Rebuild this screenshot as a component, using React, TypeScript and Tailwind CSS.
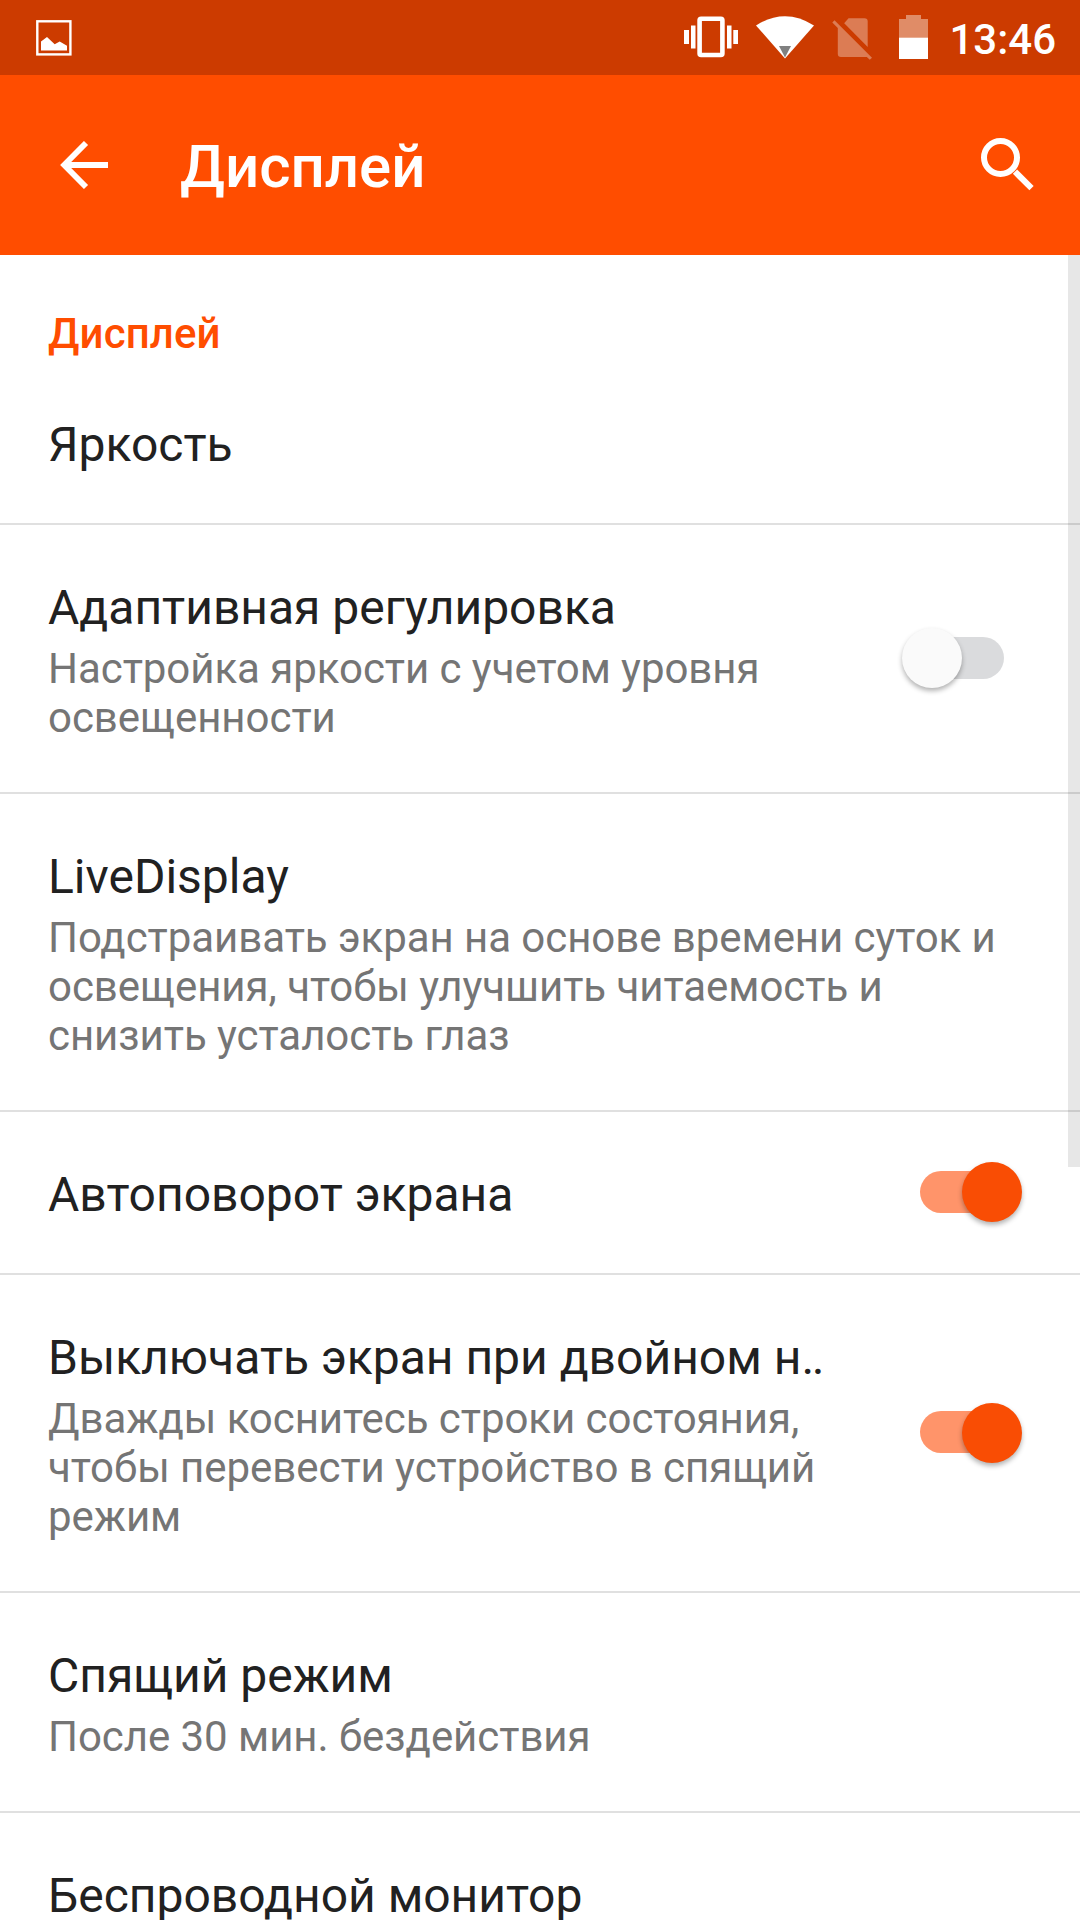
import { useState } from 'react';

const GalleryIcon = () => (
  <svg width="36" height="36" viewBox="36 20 36 36" fill="none">
    <rect x="37.3" y="21.3" width="33.1" height="33.1" stroke="#fff" strokeWidth="2.4" />
    <path d="M41 50.500V41.500L47 37l7.700 7.200 5-2.600 7.300 4.200v4.700z" fill="#fff" />
  </svg>
);

const VibrateIcon = () => (
  <svg width="54" height="42" viewBox="684 16 54 42" fill="#fff">
    <rect x="699.6" y="18.8" width="22.8" height="36.2" rx="1.5" fill="none" stroke="#fff" strokeWidth="4.6" />
    <path d="M684 30h5v14h-5zM691 25.5h4.5v23H691zM727 25.5h4.5v23H727zM733.3 30h4.7v14h-4.7z" />
  </svg>
);

const WifiIcon = () => (
  <svg width="58" height="43" viewBox="756 16 58 43">
    <path d="M756 25.5Q785 7 814 25.5L785 58.5z" fill="#fff" />
    <path d="M779 46h12l-6 11.5z" fill="#808080" />
  </svg>
);

const NoSimIcon = () => (
  <svg width="40" height="42" viewBox="832 18 40 42" fill="#dc7c54">
    <path d="M848.5 18.300H864.500a3.200 3.200 0 0 1 3.200 3.200V47L844.200 23.200z" />
    <path d="M834.5 20.300L872 57.700l-2.200 2L866.800 57H841a3.200 3.200 0 0 1-3.200-3.200V28L832.300 22.500z" />
  </svg>
);

const BatteryIcon = () => (
  <svg width="29" height="44" viewBox="899 15 29 44">
    <path d="M906 15h15v4h7v19h-29V19h7z" fill="#e08c67" />
    <path d="M899 37.7h29V59h-29z" fill="#fff" />
  </svg>
);

const BackIcon = () => (
  <svg width="48" height="48" viewBox="60 141 48 48" fill="none" stroke="#fff" strokeWidth="5.8">
    <path d="M108 165H66M86 143L64.2 165l21.8 22" />
  </svg>
);

const SearchIcon = () => (
  <svg width="54" height="54" viewBox="980 137 54 54" fill="none" stroke="#fff" strokeWidth="6">
    <circle cx="1000.5" cy="157.5" r="16.5" />
    <path d="M1015 171.700L1031.500 188.200" />
  </svg>
);

const Toggle = ({ on, onChange }: { on: boolean; onChange: () => void }) => (
  <button
    role="switch"
    aria-checked={on}
    onClick={onChange}
    className={`mb-[2px] flex h-[42px] w-[84px] shrink-0 items-center rounded-full ${
      on ? 'justify-end bg-[#ff946a]' : 'justify-start bg-[#dadbdd]'
    }`}
  >
    <span
      className={`mt-px size-[60px] shrink-0 rounded-full shadow-[0_3px_5px_rgba(0,0,0,0.3)] ${
        on ? '-mr-[18px] bg-[#f94d04]' : '-ml-[18px] bg-[#fafafa]'
      }`}
    />
  </button>
);

type Item = { id: string; title: string; summary?: string[]; toggle?: boolean };

const items: Item[] = [
  { id: 'brightness', title: 'Яркость' },
  {
    id: 'adaptive',
    title: 'Адаптивная регулировка',
    summary: ['Настройка яркости с учетом уровня', 'освещенности'],
    toggle: true,
  },
  {
    id: 'livedisplay',
    title: 'LiveDisplay',
    summary: [
      'Подстраивать экран на основе времени суток и',
      'освещения, чтобы улучшить читаемость и',
      'снизить усталость глаз',
    ],
  },
  { id: 'rotate', title: 'Автоповорот экрана', toggle: true },
  {
    id: 'doubletap',
    title: 'Выключать экран при двойном н‥',
    summary: ['Дважды коснитесь строки состояния,', 'чтобы перевести устройство в спящий', 'режим'],
    toggle: true,
  },
  { id: 'sleep', title: 'Спящий режим', summary: ['После 30 мин. бездействия'] },
  { id: 'cast', title: 'Беспроводной монитор' },
];

const App = () => {
  const [enabled, setEnabled] = useState<Record<string, boolean>>({
    adaptive: false,
    rotate: true,
    doubletap: true,
  });

  const flip = (id: string) => setEnabled(prev => ({ ...prev, [id]: !prev[id] }));

  return (
    <div className="flex h-[1920px] w-[1080px] flex-col overflow-hidden bg-white font-['Roboto',sans-serif]">
      {/* Status bar */}
      <div className="flex h-[75px] shrink-0 items-start bg-[#cc3b00] pl-[36px] pr-[24px] text-white">
        <div className="pt-[20px]">
          <GalleryIcon />
        </div>
        <div className="ml-auto flex items-start">
          <div className="pt-[16px]">
            <VibrateIcon />
          </div>
          <div className="ml-[18px] pt-[16px]">
            <WifiIcon />
          </div>
          <div className="ml-[18px] pt-[18px]">
            <NoSimIcon />
          </div>
          <div className="ml-[27px] pt-[15px]">
            <BatteryIcon />
          </div>
          <span className="ml-[21px] pt-[15px] text-[42px] font-medium leading-[49px]">13:46</span>
        </div>
      </div>

      {/* App bar */}
      <header className="flex h-[180px] shrink-0 items-center bg-[#ff4d00] pl-[60px] pr-[46px] text-white">
        <button aria-label="Назад">
          <BackIcon />
        </button>
        <h1 className="ml-[72px] mt-[4px] text-[60px] font-medium leading-[70px]">Дисплей</h1>
        <button className="-mt-[2px] ml-auto" aria-label="Поиск">
          <SearchIcon />
        </button>
      </header>

      <main className="relative min-h-0 flex-1 overflow-hidden">
        <h2 className="h-[107px] px-12 pt-[54px] text-[42px] font-medium leading-[49px] tracking-[0.1px] text-[#ff4d00]">
          Дисплей
        </h2>
        {items.map(item => (
          <div
            key={item.id}
            className="flex items-center justify-between whitespace-nowrap border-b-2 border-[#e0e0e0] pl-12 pr-[76px]"
          >
            <div className="pb-[50px] pt-[54px]">
              <div className="text-[48px] leading-[57px] text-[#212121]">{item.title}</div>
              {item.summary && (
                <div className="mt-2 text-[42px] leading-[49px] tracking-[-0.05px] text-[#757575]">
                  {item.summary.map(line => (
                    <div key={line}>{line}</div>
                  ))}
                </div>
              )}
            </div>
            {item.toggle && <Toggle on={enabled[item.id]} onChange={() => flip(item.id)} />}
          </div>
        ))}

        {/* Scrollbar thumb */}
        <div className="absolute right-0 top-0 h-[912px] w-3 bg-black/[0.094]" />
      </main>
    </div>
  );
};

export default App;
